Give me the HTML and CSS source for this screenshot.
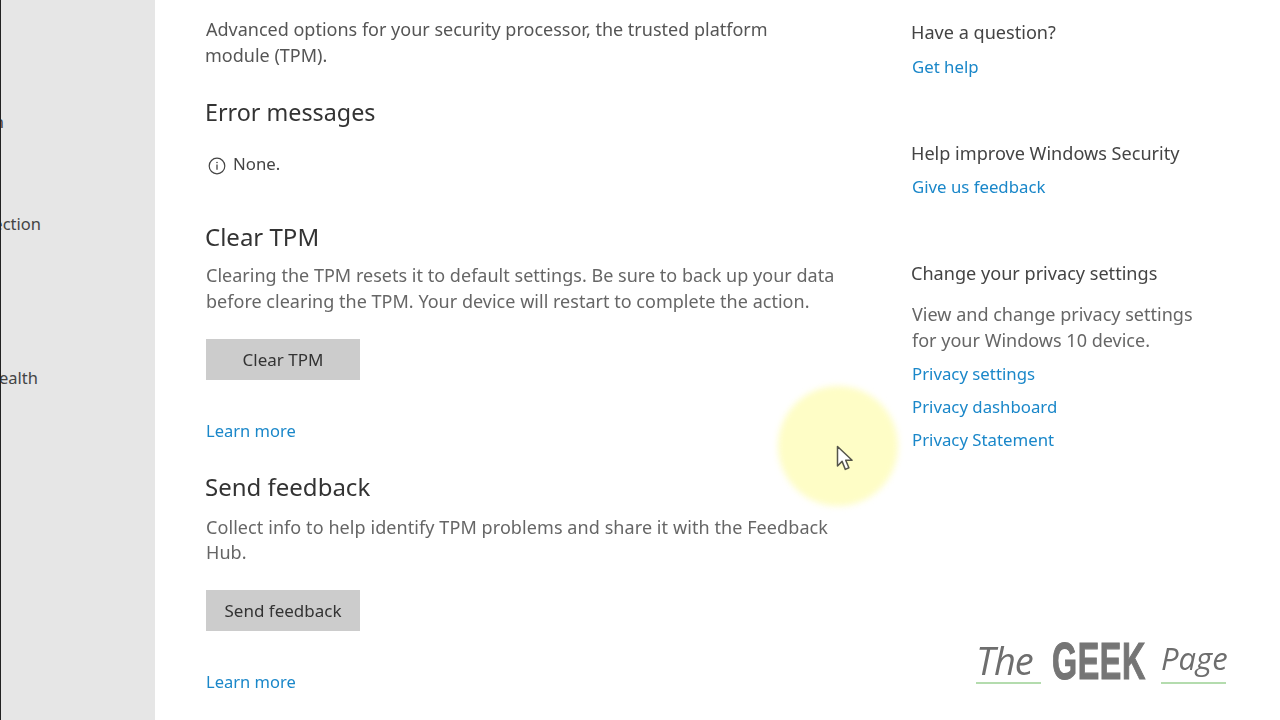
FILE: index.html
```html
<!DOCTYPE html>
<html lang="en">
<head>
<meta charset="utf-8">
<title>Windows Security - TPM</title>
<link rel="stylesheet" href="styles.css">
</head>
<body>
<div class="page">
  <nav class="sidebar">
    <div class="nav-item nav-a"><span>Authentication</span></div>
    <div class="nav-item nav-b"><span>Firewall &amp; network protection</span></div>
    <div class="nav-item nav-c"><span>Device performance &amp; health</span></div>
  </nav>
  <main class="main">
    <section class="intro">
      <p class="body-text">Advanced options for your security processor, the trusted platform<br><span class="out">module (TPM).</span></p>
    </section>
    <section class="errors">
      <h2 class="heading">Error messages</h2>
      <div class="none-row">
        <svg class="info" width="18" height="18" viewBox="0 0 18 18" aria-hidden="true"><circle cx="9" cy="9" r="7.8" fill="none" stroke="#444" stroke-width="1.2"/><path d="M9 7.6v5.2" stroke="#444" stroke-width="1.3"/><circle cx="9" cy="5.5" r=".8" fill="#444"/></svg>
        <span>None.</span>
      </div>
    </section>
    <section class="block block-clear">
      <h2 class="heading">Clear TPM</h2>
      <p class="body-text grey">Clearing the TPM resets it to default settings. Be sure to back up your data<br>before clearing the TPM. Your device will restart to complete the action.</p>
      <button class="btn">Clear TPM</button>
      <a class="link learn">Learn more</a>
    </section>
    <section class="block block-send">
      <h2 class="heading">Send feedback</h2>
      <p class="body-text grey">Collect info to help identify TPM problems and share it with the Feedback<br>Hub.</p>
      <button class="btn">Send feedback</button>
      <a class="link learn">Learn more</a>
    </section>
  </main>
  <aside class="aside">
    <div class="group g-question">
      <div class="aside-title">Have a question?</div>
      <a class="link">Get help</a>
    </div>
    <div class="group g-improve">
      <div class="aside-title">Help improve Windows Security</div>
      <a class="link">Give us feedback</a>
    </div>
    <div class="group g-privacy">
      <div class="aside-title">Change your privacy settings</div>
      <p class="aside-text">View and change privacy settings<br>for your Windows 10 device.</p>
      <a class="link">Privacy settings</a>
      <a class="link">Privacy dashboard</a>
      <a class="link">Privacy Statement</a>
    </div>
  </aside>
</div>
<div class="spotlight"></div>
<svg class="cursor" width="18" height="27" viewBox="0 0 18 27" aria-hidden="true"><path d="M1.5 1.5V21l4.6-4.6 3.2 8 3.6-1.6-3.2-7.6h6.4z" fill="#fff" stroke="#55554a" stroke-width="1.5" stroke-linejoin="round"/></svg>
<div class="logo">
  <span class="logo-script u-the">The</span>
  <span class="logo-geek">GEEK</span>
  <span class="logo-script u-page">Page</span>
</div>
</body>
</html>
```
FILE: styles.css
```css
* { box-sizing: border-box; }
html, body { margin: 0; height: 100%; overflow: hidden; background: #fff; }
body { font-family: "Noto Sans", "Open Sans", sans-serif; font-size: 17px; color: #4a4a4a; }
p, h2 { margin: 0; font-weight: 400; }

.page { display: flex; height: 720px; filter: blur(.3px); }

.sidebar { width: 155px; flex: none; background: #e6e6e6; border-left: 1px solid #222; padding-top: 110px; font-size: 16.5px; color: #444; }
.nav-item { display: flex; justify-content: flex-end; overflow: hidden; white-space: nowrap; height: 24px; line-height: 24px; }
.nav-a { width: 3px; }
.nav-b { width: 40px; margin-top: 78px; }
.nav-c { width: 37px; margin-top: 130px; }

.main { width: 757px; flex: none; padding: 17px 0 0 51px; }
.body-text { font-size: 18px; line-height: 25.5px; color: #555; white-space: nowrap; }
.out { margin-left: -1px; }
.grey { color: #666; }
.heading { font-size: 24px; line-height: 32px; color: #333; margin-left: -1px; }
.errors .heading { font-size: 23.3px; }

.errors { margin-top: 28px; }
.none-row { display: flex; align-items: center; gap: 7px; margin-top: 24px; font-size: 16.8px; line-height: 24px; color: #444; margin-left: 2px; }
.info { margin-top: 3px; }

.block { display: flex; flex-direction: column; align-items: flex-start; }
.block-clear { margin-top: 45px; }
.block-send { margin-top: 28px; }
.block .body-text { margin-top: 10px; letter-spacing: .02px; }
.block-send .body-text { margin-top: 11.5px; letter-spacing: .08px; }

.btn { width: 154px; height: 41px; margin-top: 25px; border: 0; background: #cccccc; color: #333; font: 17px "Noto Sans", sans-serif; padding: 0; }
.block-send .btn { margin-top: 24px; }
.link { display: block; color: #1a87c9; font-size: 16.8px; line-height: 24px; }
.learn { margin-top: 39px; font-size: 16.5px; }

.aside { flex: 1; padding: 20px 0 0 0; }
.aside-title { font-size: 18.1px; line-height: 24px; color: #444; margin-left: -1px; }
.group .link { margin-top: 10px; }
.g-question .link { margin-top: 11px; }
.g-improve { margin-top: 62px; }
.g-privacy { margin-top: 62px; }
.aside-text { font-size: 18.05px; line-height: 26px; color: #666; margin-top: 16px; white-space: nowrap; }
.g-privacy .link { margin-top: 9.4px; }
.group .aside-text + .link { margin-top: 8.5px; }

.spotlight { position: absolute; left: 778px; top: 386px; width: 120px; height: 120px; border-radius: 50%; background: #fefdc6; filter: blur(3px); }
.cursor { position: absolute; left: 836px; top: 445px; }

.logo { position: absolute; left: 976px; top: 638px; display: flex; align-items: flex-start; height: 50px; color: #777; filter: blur(.4px); }
.logo-script { font-family: "Open Sans", sans-serif; font-style: italic; line-height: 44px; height: 46px; border-bottom: 2px solid #b4dcae; color: #6e6e6e; white-space: nowrap; }
.u-the { width: 65px; font-size: 38px; letter-spacing: -1px; }
.u-page { font-size: 31px; width: 65px; margin-left: 15px; line-height: 40px; }
.logo-geek { font-family: "Liberation Sans", sans-serif; font-weight: 700; font-size: 52px; line-height: 46px; color: #757575; margin-left: 11px; width: 94px; display: inline-block; transform: scaleX(.62); transform-origin: left center; -webkit-text-stroke: 1.2px #757575; letter-spacing: 1px; white-space: nowrap; }
```
